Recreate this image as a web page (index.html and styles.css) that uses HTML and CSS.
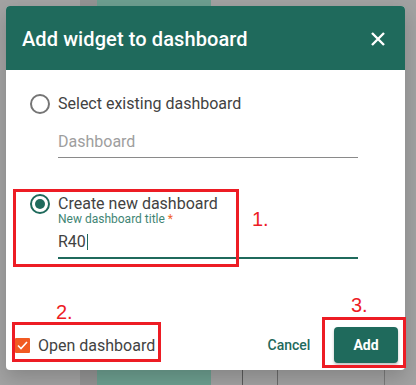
FILE: index.html
```html
<!DOCTYPE html>
<html lang="en">
<head>
  <meta charset="UTF-8" />
  <meta name="viewport" content="width=device-width, initial-scale=1" />
  <title>Add widget to dashboard</title>
  <link rel="stylesheet" href="styles.css">
</head>
<body>
  <div class="backdrop">
    <div class="dialog">
      <div class="dialog-header">
        <h2 class="dialog-title">Add widget to dashboard</h2>
        <button class="close-btn" aria-label="Close">
          <svg width="14" height="14" viewBox="0 0 14 14">
            <path d="M1 1 L13 13 M13 1 L1 13" stroke="#fff" stroke-width="2.4" fill="none" />
          </svg>
        </button>
      </div>

      <div class="dialog-content">
        <label class="radio-row">
          <span class="radio"></span>
          <span class="radio-label">Select existing dashboard</span>
        </label>
        <div class="field">
          <div class="field-input placeholder">Dashboard</div>
        </div>

        <label class="radio-row second">
          <span class="radio checked"></span>
          <span class="radio-label">Create new dashboard</span>
        </label>
        <div class="field active">
          <div class="field-label">New dashboard title <span class="req">*</span></div>
          <div class="field-input">R40<span class="caret"></span></div>
        </div>
      </div>

      <div class="dialog-actions">
        <label class="check-row">
          <span class="checkbox">
            <svg width="11" height="9" viewBox="0 0 11 9">
              <path d="M1 4.5 L4 7.5 L10 1" stroke="#fff" stroke-width="1.6" fill="none" />
            </svg>
          </span>
          <span class="check-label">Open dashboard</span>
        </label>
        <div class="buttons">
          <button class="btn-text">Cancel</button>
          <button class="btn-primary">Add</button>
        </div>
      </div>
    </div>
  </div>

  <!-- annotations drawn over the screenshot -->
  <div class="mark box-1"></div>
  <div class="mark box-2"></div>
  <div class="mark box-3"></div>
  <div class="step step-1">1.</div>
  <div class="step step-2">2.</div>
  <div class="step step-3">3.</div>
</body>
</html>
```

FILE: styles.css
```css
html, body {
  margin: 0;
  padding: 0;
  width: 416px;
  height: 385px;
  overflow: hidden;
  font-family: Roboto, "Noto Sans", sans-serif;
}

body {
  position: relative;
  background:
    linear-gradient(to right, transparent 242px, #5a5a5a 242px 243px, transparent 243px 277px, #6a6a6a 277px 278px, transparent 278px 384px, #7a7a7a 384px 385px, transparent 385px) 0 370px / 100% 15px no-repeat,
    linear-gradient(to right, #a3a3a3 0 80px, #949494 80px 97px, #6d9f90 97px 211px, #a2a2a2 211px);
}

.backdrop {
  padding: 6px;
}

.dialog {
  width: 399px;
  height: 364px;
  background: #fff;
  border-radius: 4px;
  overflow: hidden;
  display: flex;
  flex-direction: column;
  box-shadow: 0 8px 20px rgba(0, 0, 0, 0.18);
}

.dialog-header {
  height: 64px;
  background: #1f6a5c;
  display: flex;
  align-items: center;
  justify-content: space-between;
  padding: 0 20px 0 16px;
}

.dialog-title {
  margin: 0;
  color: #fff;
  font-size: 20px;
  font-weight: 500;
  letter-spacing: 0.1px;
  padding-top: 1px;
}

.close-btn {
  border: 0;
  background: none;
  padding: 0;
  width: 14px;
  height: 14px;
  display: flex;
  margin-top: 1px;
}

.dialog-content {
  padding: 24px 0 0 24px;
}

.radio-row {
  display: flex;
  align-items: center;
  height: 20px;
  gap: 8px;
}

.radio-row.second {
  margin-top: 36px;
}

.radio {
  width: 20px;
  height: 20px;
  box-sizing: border-box;
  border: 2px solid #757575;
  border-radius: 50%;
  position: relative;
}

.radio.checked {
  border-color: #1f6a5c;
}

.radio.checked::after {
  content: "";
  position: absolute;
  left: 3px;
  top: 3px;
  width: 10px;
  height: 10px;
  border-radius: 50%;
  background: #1f6a5c;
}

.radio-label {
  font-size: 16px;
  color: #424242;
  line-height: 20px;
}

.field {
  margin: 16px 0 0 28px;
  width: 300px;
  border-bottom: 1px solid #8a8a8a;
  padding-bottom: 3px;
}

.field.active {
  margin-top: -2px;
  border-bottom: 2px solid #1f6a5c;
}

.field-label {
  font-size: 12px;
  line-height: 14px;
  color: #3f8574;
}

.req {
  color: #f0642c;
}

.field-input {
  font-size: 16px;
  line-height: 24px;
  color: #424242;
}

.field.active .field-input {
  margin-top: 4px;
}

.field-input.placeholder {
  color: #9e9e9e;
}

.caret {
  display: inline-block;
  width: 1px;
  height: 16px;
  background: #1f6a5c;
  vertical-align: -3px;
  margin-left: 1px;
}

.dialog-actions {
  margin-top: auto;
  display: flex;
  align-items: center;
  justify-content: space-between;
  padding: 0 7px 7px 9px;
}

.check-row {
  display: flex;
  align-items: center;
  gap: 8px;
}

.checkbox {
  width: 15px;
  height: 15px;
  background: #f15a22;
  border-radius: 1px;
  display: flex;
  align-items: center;
  justify-content: center;
}

.check-label {
  font-size: 16px;
  color: #424242;
}

.buttons {
  display: flex;
  align-items: center;
  gap: 13px;
}

.btn-text {
  border: 0;
  background: none;
  font-family: Roboto, sans-serif;
  font-size: 14px;
  font-weight: 500;
  color: #1f6a5c;
  width: 64px;
  height: 36px;
  padding: 0;
}

.btn-primary {
  border: 0;
  background: #1f6a5c;
  color: #fff;
  font-family: Roboto, sans-serif;
  font-size: 14px;
  font-weight: 700;
  width: 64px;
  height: 36px;
  border-radius: 4px;
  box-shadow: 0 2px 3px rgba(0, 0, 0, 0.25);
}

.mark {
  position: absolute;
  border: 3px solid #ed1c24;
  box-sizing: border-box;
}

.box-1 {
  left: 13px;
  top: 189px;
  width: 226px;
  height: 78px;
}

.box-2 {
  left: 12px;
  top: 322px;
  width: 149px;
  height: 40px;
}

.box-3 {
  left: 322px;
  top: 317px;
  width: 84px;
  height: 51px;
}

.step {
  position: absolute;
  font-family: "Liberation Sans", Arial, sans-serif;
  font-size: 20px;
  line-height: 20px;
  color: #ed1c24;
}

.step-1 {
  left: 252px;
  top: 209px;
}

.step-2 {
  left: 56px;
  top: 302px;
}

.step-3 {
  left: 351px;
  top: 295px;
}
```
